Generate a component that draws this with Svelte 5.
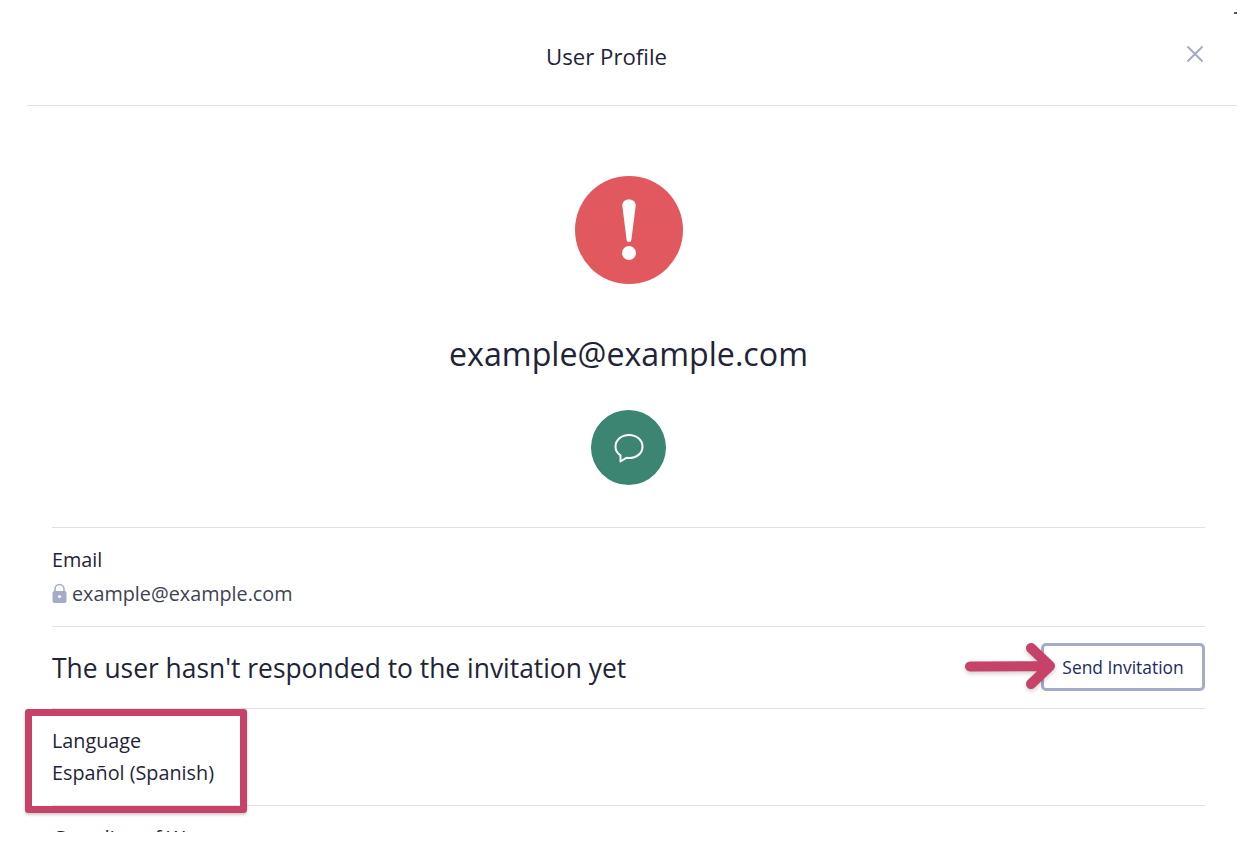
<script lang="ts">
	const language = 'Español (Spanish)';
	const email = 'example@example.com';
</script>

<div class="page">
	<span class="corner"></span>
	<div class="modal">
		<header class="modal-header">
			<h1>User Profile</h1>
			<button class="close" aria-label="Close">
				<svg width="18" height="18" viewBox="0 0 18 18"><path d="M1.500 1.500l15 15M16.500 1.500l-15 15" stroke="#a3abc6" stroke-width="2" fill="none" /></svg>
			</button>
		</header>

		<div class="body">
			<div class="hero">
				<div class="avatar">
					<svg width="22" height="64" viewBox="0 0 22 64">
						<path d="M11 1.500c-4.200 0-6.900 2.500-6.700 6.300l4.300 34c.2 1.500 1 2.200 2.400 2.200s2.200-.7 2.400-2.200l4.300-34c.2-3.800-2.500-6.300-6.700-6.300z" fill="#fff" />
						<circle cx="11" cy="55" r="7" fill="#fff" />
					</svg>
				</div>
				<div class="hero-email">{email}</div>
				<button class="chat" aria-label="Chat">
					<svg width="30" height="30" viewBox="0 0 30 30">
						<path d="M6.500 22.300C3.300 20.200 1.500 17.200 1.500 13.700 1.500 7 7.500 2 15 2s13.500 5 13.500 11.700S22.500 25 15 25c-.9 0-1.800-.1-2.700-.2L6.500 28.500z" fill="none" stroke="#fff" stroke-width="2" stroke-linejoin="round" />
					</svg>
				</button>
			</div>

			<section class="row">
				<div class="label">Email</div>
				<div class="value locked">
					<svg width="15" height="20" viewBox="0 0 15 20">
						<path d="M3 9V6a4.500 4.500 0 0 1 9 0v3" fill="none" stroke="#a3abc6" stroke-width="1.500" />
						<rect x="0.500" y="8" width="14" height="12" rx="2" fill="#a3abc6" />
						<circle cx="7.500" cy="13.500" r="1.600" fill="#fff" />
					</svg>
					<span>{email}</span>
				</div>
			</section>

			<section class="row invite">
				<div class="invite-text">The user hasn't responded to the invitation yet</div>
				<button class="send">Send Invitation</button>
			</section>

			<section class="row">
				<div class="label">Language</div>
				<div class="value dark">{language}</div>
			</section>

			<section class="row">
				<div class="label">Guardian of Women</div>
			</section>
		</div>
	</div>

	<div class="highlight"></div>
	<svg class="arrow" width="100" height="60" viewBox="0 0 100 60">
		<path d="M10 29.500L88 29M71 11l19 18L71 47" fill="none" stroke="#c64269" stroke-width="10" stroke-linecap="round" stroke-linejoin="round" />
	</svg>
</div>

<style>
	:global(body) {
		background: #fff;
	}

	.page {
		position: relative;
		width: 1258px;
		height: 856px;
		overflow: hidden;
		background: #fff;
		font-family: 'Open Sans', sans-serif;
		color: #1f2438;
	}

	.corner {
		position: absolute;
		top: 12px;
		left: 1234px;
		width: 3px;
		height: 2px;
		background: #555;
	}

	.modal {
		margin-left: 27px;
		width: 1210px;
		height: 832px;
		overflow: hidden;
	}

	.modal-header {
		display: flex;
		align-items: center;
		height: 105px;
		padding-right: 33px;
		border-bottom: 1px solid #e0e2e2;
	}

	h1 {
		flex: 1;
		margin: 0;
		padding-top: 8px;
		text-align: center;
		font-size: 22.2px;
		font-weight: 400;
		line-height: 28px;
	}

	.close {
		display: flex;
		padding: 0;
		border: none;
		background: none;
		margin-top: 2px;
	}

	.body {
		padding: 0 32px 0 25px;
	}

	.hero {
		display: flex;
		flex-direction: column;
		align-items: center;
		padding-top: 70px;
		padding-bottom: 42px;
		border-bottom: 1px solid #e0e2e2;
	}

	.avatar {
		display: flex;
		align-items: center;
		justify-content: center;
		width: 108px;
		height: 108px;
		border-radius: 50%;
		background: #e2585f;
	}

	.hero-email {
		margin-top: 48px;
		font-size: 32.2px;
		line-height: 44px;
	}

	.chat {
		display: flex;
		align-items: center;
		justify-content: center;
		margin-top: 34px;
		width: 75px;
		height: 75px;
		padding: 0;
		border: none;
		border-radius: 50%;
		background: #3b8572;
	}

	.row {
		padding: 16px 0;
		border-bottom: 1px solid #e0e2e2;
	}

	.label,
	.value {
		font-size: 19.8px;
		line-height: 32px;
	}

	.dark {
		color: #1f2438;
	}

	.locked {
		display: flex;
		align-items: center;
		gap: 5px;
		margin-top: 2px;
		color: #3f4352;
	}

	.locked svg {
		margin-bottom: 3px;
	}

	.invite {
		display: flex;
		align-items: center;
		justify-content: space-between;
		height: 81px;
		padding: 0;
	}

	.invite-text {
		font-size: 26.4px;
		line-height: 36px;
	}

	.send {
		width: 164px;
		height: 48px;
		margin-bottom: 1px;
		padding: 0 0 1px;
		border: 3px solid #a3abc6;
		border-radius: 5px;
		background: #fff;
		color: #1c2a66;
		font-family: inherit;
		font-size: 17.4px;
	}

	.highlight {
		position: absolute;
		left: 25px;
		top: 709px;
		width: 222px;
		height: 104px;
		box-sizing: border-box;
		border: 7px solid #c64269;
		border-radius: 3px;
		box-shadow: 0 2px 3px rgba(0, 0, 0, 0.2);
	}

	.arrow {
		position: absolute;
		left: 960px;
		top: 637px;
		filter: drop-shadow(0 2px 2px rgba(0, 0, 0, 0.2));
	}
</style>
